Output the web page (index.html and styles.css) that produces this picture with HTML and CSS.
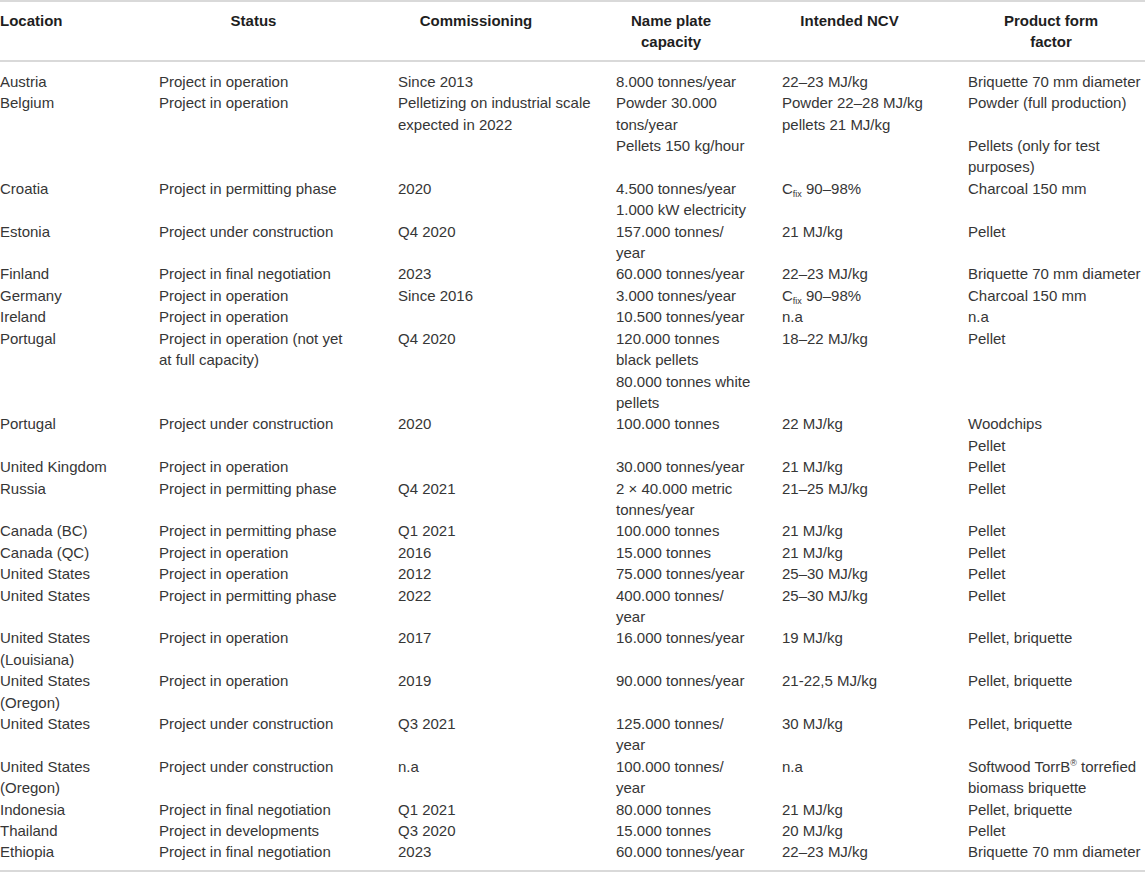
FILE: index.html
```html
<!DOCTYPE html>
<html>
<head>
<meta charset="utf-8">
<link rel="stylesheet" href="styles.css">
</head>
<body>
<table class="data">
<colgroup>
<col class="c1"><col class="c2"><col class="c3"><col class="c4"><col class="c5"><col class="c6">
</colgroup>
<thead>
<tr>
<th class="h-loc">Location</th>
<th class="h-status">Status</th>
<th class="h-comm">Commissioning</th>
<th class="h-cap">Name plate<br>capacity</th>
<th class="h-ncv">Intended NCV</th>
<th class="h-form">Product form<br>factor</th>
</tr>
</thead>
<tbody>
<tr class="first"><td>Austria</td><td>Project in operation</td><td>Since 2013</td><td>8.000 tonnes/year</td><td>22–23 MJ/kg</td><td>Briquette 70 mm diameter</td></tr>
<tr><td>Belgium</td><td>Project in operation</td><td>Pelletizing on industrial scale<br>expected in 2022</td><td>Powder 30.000<br>tons/year<br>Pellets 150 kg/hour</td><td>Powder 22–28 MJ/kg<br>pellets 21 MJ/kg</td><td>Powder (full production)<br>&nbsp;<br>Pellets (only for test<br>purposes)</td></tr>
<tr><td>Croatia</td><td>Project in permitting phase</td><td>2020</td><td>4.500 tonnes/year<br>1.000 kW electricity</td><td>C<sub>fix</sub> 90–98%</td><td>Charcoal 150 mm</td></tr>
<tr><td>Estonia</td><td>Project under construction</td><td>Q4 2020</td><td>157.000 tonnes/<br>year</td><td>21 MJ/kg</td><td>Pellet</td></tr>
<tr><td>Finland</td><td>Project in final negotiation</td><td>2023</td><td>60.000 tonnes/year</td><td>22–23 MJ/kg</td><td>Briquette 70 mm diameter</td></tr>
<tr><td>Germany</td><td>Project in operation</td><td>Since 2016</td><td>3.000 tonnes/year</td><td>C<sub>fix</sub> 90–98%</td><td>Charcoal 150 mm</td></tr>
<tr><td>Ireland</td><td>Project in operation</td><td></td><td>10.500 tonnes/year</td><td>n.a</td><td>n.a</td></tr>
<tr><td>Portugal</td><td>Project in operation (not yet<br>at full capacity)</td><td>Q4 2020</td><td>120.000 tonnes<br>black pellets<br>80.000 tonnes white<br>pellets</td><td>18–22 MJ/kg</td><td>Pellet</td></tr>
<tr><td>Portugal</td><td>Project under construction</td><td>2020</td><td>100.000 tonnes</td><td>22 MJ/kg</td><td>Woodchips<br>Pellet</td></tr>
<tr><td>United Kingdom</td><td>Project in operation</td><td></td><td>30.000 tonnes/year</td><td>21 MJ/kg</td><td>Pellet</td></tr>
<tr><td>Russia</td><td>Project in permitting phase</td><td>Q4 2021</td><td>2 × 40.000 metric<br>tonnes/year</td><td>21–25 MJ/kg</td><td>Pellet</td></tr>
<tr><td>Canada (BC)</td><td>Project in permitting phase</td><td>Q1 2021</td><td>100.000 tonnes</td><td>21 MJ/kg</td><td>Pellet</td></tr>
<tr><td>Canada (QC)</td><td>Project in operation</td><td>2016</td><td>15.000 tonnes</td><td>21 MJ/kg</td><td>Pellet</td></tr>
<tr><td>United States</td><td>Project in operation</td><td>2012</td><td>75.000 tonnes/year</td><td>25–30 MJ/kg</td><td>Pellet</td></tr>
<tr><td>United States</td><td>Project in permitting phase</td><td>2022</td><td>400.000 tonnes/<br>year</td><td>25–30 MJ/kg</td><td>Pellet</td></tr>
<tr><td>United States<br>(Louisiana)</td><td>Project in operation</td><td>2017</td><td>16.000 tonnes/year</td><td>19 MJ/kg</td><td>Pellet, briquette</td></tr>
<tr><td>United States<br>(Oregon)</td><td>Project in operation</td><td>2019</td><td>90.000 tonnes/year</td><td>21-22,5 MJ/kg</td><td>Pellet, briquette</td></tr>
<tr><td>United States</td><td>Project under construction</td><td>Q3 2021</td><td>125.000 tonnes/<br>year</td><td>30 MJ/kg</td><td>Pellet, briquette</td></tr>
<tr><td>United States<br>(Oregon)</td><td>Project under construction</td><td>n.a</td><td>100.000 tonnes/<br>year</td><td>n.a</td><td>Softwood TorrB<sup>®</sup> torrefied<br>biomass briquette</td></tr>
<tr><td>Indonesia</td><td>Project in final negotiation</td><td>Q1 2021</td><td>80.000 tonnes</td><td>21 MJ/kg</td><td>Pellet, briquette</td></tr>
<tr><td>Thailand</td><td>Project in developments</td><td>Q3 2020</td><td>15.000 tonnes</td><td>20 MJ/kg</td><td>Pellet</td></tr>
<tr class="last"><td>Ethiopia</td><td>Project in final negotiation</td><td>2023</td><td>60.000 tonnes/year</td><td>22–23 MJ/kg</td><td>Briquette 70 mm diameter</td></tr>
</tbody>
</table>
</body>
</html>
```
FILE: styles.css
```css
html, body {
  margin: 0;
  padding: 0;
  background: #ffffff;
}
body {
  font-family: "Liberation Sans", Arial, Helvetica, sans-serif;
  font-size: 15px;
  line-height: 21.4px;
  color: #363636;
}
.data {
  width: 1145px;
  border-collapse: collapse;
  table-layout: fixed;
}
.c1 { width: 159px; }
.c2 { width: 239px; }
.c3 { width: 218px; }
.c4 { width: 166px; }
.c5 { width: 186px; }
.c6 { width: 177px; }
.data thead tr {
  border-top: 2px solid #d9d9d9;
  border-bottom: 2px solid #d9d9d9;
}
.data th {
  font-weight: bold;
  color: #1e1e1e;
  text-align: center;
  vertical-align: top;
  padding: 8px 0 7px 0;
  white-space: nowrap;
}
.data th.h-loc { text-align: left; }
.data th.h-status { padding-right: 50px; }
.data th.h-comm { padding-right: 62px; }
.data th.h-cap { padding-right: 56px; }
.data th.h-ncv { padding-right: 51px; }
.data th.h-form { padding-right: 11px; }
.data td {
  padding: 0;
  vertical-align: top;
  text-align: left;
  white-space: nowrap;
}
.data tr.first td { padding-top: 9px; }
.data tr.last td { padding-bottom: 7px; }
.data tbody tr.last { border-bottom: 2px solid #d9d9d9; }
.data sub {
  font-size: 9px;
  line-height: 0;
  vertical-align: -3px;
}
.data sup {
  font-size: 9px;
  line-height: 0;
  vertical-align: 6px;
}
```
